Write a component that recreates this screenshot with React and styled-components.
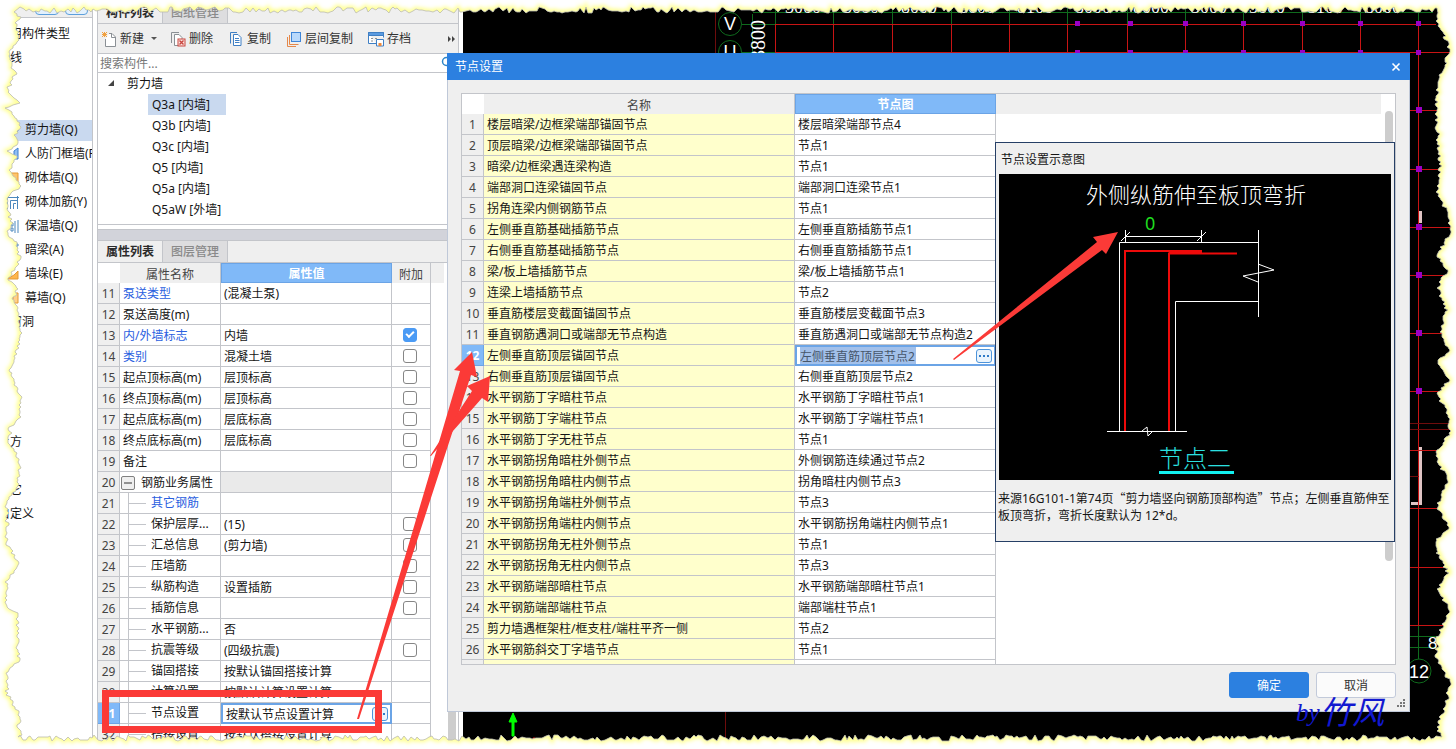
import React from "react";
import styled, { createGlobalStyle, css } from "styled-components";

const line = "#c3c5ca";
const soft = "#efefef";
const blue = "#2c80e0";
const headBlue = "#80b9f8";
const mark = "#fb3a37";

const GlobalStyle = createGlobalStyle`
  *, *::before, *::after { box-sizing: border-box; }
  body {
    margin: 0;
    background: #fff;
    color: #151515;
    font: 12px/20px "Noto Sans", "Noto Sans CJK SC", sans-serif;
  }
  button, input { font: inherit; color: inherit; margin: 0; padding: 0; }
  button { background: none; border: 0; }
  ul { list-style: none; margin: 0; padding: 0; }
`;

const Desktop = styled.div`
  position: relative;
  display: flex;
  height: 100vh;
  overflow: hidden;
`;

/* ---------- category navigation ---------- */

const Nav = styled.nav`
  flex: 0 0 93px;
  border-right: 1px solid ${line};
  overflow: hidden;
`;

const NavHead = styled.div`
  display: flex;
  gap: 6px;
  height: 18px;
  padding: 0 4px 2px 35px;
  background: ${soft};
  border-bottom: 1px solid ${line};
`;

const NavTool = styled.button`
  width: 24px;
  height: 15px;
  background: #e3f1fd;
  border: 1px solid #5c9fdc;
  border-radius: 4px;
`;

const NavList = styled.ul`
  padding-top: 4px;
`;

const NavRow = styled.li`
  display: flex;
  align-items: center;
  height: 24px;
  white-space: nowrap;
`;

const NavGroup = styled.span`
  text-indent: -2px;
`;

const NavItem = styled.button`
  display: flex;
  align-items: center;
  gap: 6px;
  width: 100%;
  height: 21px;
  padding-left: 5px;
  background: ${(p) => (p.$active ? "#c9d9ef" : "none")};
  svg { flex: none; }
`;

/* ---------- component / property panel ---------- */

const Panel = styled.section`
  display: flex;
  flex-direction: column;
  flex: 0 0 362px;
  margin: 0 4px;
  border: solid ${line};
  border-width: 0 1px;
  background: #fff;
`;

const Tabs = styled.div`
  display: flex;
  flex: none;
  height: ${(p) => (p.$top ? 24 : 22)}px;
  padding-top: ${(p) => (p.$top ? 2 : 0)}px;
  background: ${soft};
  border-bottom: 1px solid ${line};
`;

const Tab = styled.button`
  width: 65px;
  border-right: 1px solid ${line};
  background: ${(p) => (p.$active ? soft : "#dddddf")};
  color: ${(p) => (p.$active ? "#2b2b2b" : "#8a8a8a")};
  font-weight: ${(p) => (p.$active ? 700 : 500)};
`;

const Toolbar = styled.div`
  display: flex;
  align-items: center;
  gap: 11px;
  height: 30px;
  flex: none;
  padding: 0 2px 0 1px;
  background: ${soft};
  border-bottom: 1px solid ${line};
`;

const Split = styled.div`
  display: flex;
`;

const ToolButton = styled.button`
  display: flex;
  align-items: center;
  gap: 3px;
  padding: 0 2px;
  color: #333;
  white-space: nowrap;
`;

const Caret = styled.button`
  width: 11px;
  display: flex;
  align-items: center;
  justify-content: flex-end;
`;

const More = styled(Caret)`
  margin-left: auto;
`;

const SearchBar = styled.label`
  display: flex;
  align-items: center;
  flex: none;
  height: 19px;
  padding: 0 3px 0 2px;
  border-bottom: 1px solid ${line};
  input {
    flex: 1;
    min-width: 0;
    height: 18px;
    padding-top: 1px;
    border: 0;
    outline: 0;
    background: none;
  }
  input::placeholder { color: #777; opacity: 1; }
`;

const Tree = styled.ul`
  flex: none;
  padding-bottom: 4px;
  border-bottom: 1px solid ${line};
`;

const TreeRoot = styled.li`
  display: flex;
  align-items: center;
  gap: 12px;
  height: 21px;
  padding-left: 9px;
`;

const TreeLeaf = styled.li`
  height: 21px;
  padding-left: 50px;
`;

const LeafButton = styled.button`
  height: 21px;
  padding: 0 16px 0 4px;
  background: ${(p) => (p.$active ? "#c9d9ef" : "none")};
`;

const Splitter = styled.div`
  flex: none;
  height: 12px;
  margin-top: 4px;
  background: #d2d3da;
  border: solid ${line};
  border-width: 1px 0;
`;

const PropArea = styled.div`
  flex: 1;
  min-height: 0;
  display: flex;
  justify-content: space-between;
  overflow: hidden;
  padding-right: 2px;
`;

const Thumb = styled.div`
  width: 8px;
  background: #cdcdcd;
`;

/* ---------- tables ---------- */

const Grid = styled.table`
  table-layout: fixed;
  border-collapse: separate;
  border-spacing: 0;
  width: ${(p) => p.$width};
  height: fit-content;
`;

const Head = styled.th`
  height: 20px;
  padding: 2px 0 0;
  line-height: 17px;
  font-weight: 400;
  color: #444;
  background: ${(p) => (p.$blank ? "#fff" : soft)};
  border-right: ${(p) => (p.$blank || p.$tail ? 0 : 1)}px solid ${line};
  ${(p) =>
    p.$current &&
    css`
      padding-top: 1px;
      background: ${headBlue};
      border: 1px solid #6ba4e6;
      color: #fff;
      font-weight: 700;
    `}
`;

const RowNo = styled.th`
  height: 21px;
  padding: 2px 0 0;
  line-height: 18px;
  font-weight: 400;
  color: #444;
  background: ${soft};
  border: solid ${line};
  border-width: 0 1px 1px 0;
  ${(p) =>
    p.$current &&
    css`
      background: ${headBlue};
      border-color: #6ba4e6;
      color: #fff;
      font-weight: 700;
    `}
`;

const Cell = styled.td`
  height: 21px;
  padding: 2px 0 0 3px;
  line-height: 18px;
  border: solid ${line};
  border-width: 0 1px 1px 0;
  background: ${(p) => p.$bg || "#fff"};
  color: ${(p) => (p.$link ? "#2a60e0" : "inherit")};
  white-space: nowrap;
  overflow: hidden;
`;

const CheckCell = styled(Cell)`
  padding: 0 2px 0 0;
`;

const EditCell = styled(Cell)`
  padding: 0 2px 0 3px;
  border: 2px solid #6ba4e6;
  line-height: 16px;
`;

const Editor = styled.div`
  display: flex;
  align-items: center;
  justify-content: space-between;
  height: 17px;
`;

const EditInput = styled.input`
  width: ${(p) => (p.$selected ? 116 : 130)}px;
  height: 17px;
  border: 0;
  outline: 0;
  background: ${(p) => (p.$selected ? "#a2c0ea" : "none")};
  color: ${(p) => (p.$selected ? "#46566a" : "inherit")};
`;

const Ellipsis = styled.button`
  display: flex;
  align-items: center;
  justify-content: center;
  width: 16px;
  height: 14px;
  border: 1px solid #4d94da;
  border-radius: 3px;
  background: #eaf4fd;
`;

const Check = styled.input`
  appearance: none;
  position: relative;
  display: block;
  width: 14px;
  height: 14px;
  margin: 0 auto;
  border: 1px solid #868686;
  border-radius: 3px;
  background: #fff;
  &:checked { background: #4b9bf5; border-color: #4b9bf5; }
  &:checked::after {
    content: "";
    position: absolute;
    left: 2px;
    top: 2px;
    width: 8px;
    height: 5px;
    border: solid #fff;
    border-width: 0 0 2px 2px;
    transform: rotate(-45deg);
  }
`;

const Branch = styled.div`
  display: flex;
  align-items: center;
  gap: 5px;
  height: 20px;
  margin-top: -2px;
  padding-left: 5px;
  line-height: 22px;
  &::before {
    content: "";
    align-self: stretch;
    width: 1px;
    margin-right: -5px;
    background: ${line};
  }
`;

const Twig = styled.span`
  width: 17px;
  height: 1px;
  background: ${line};
`;

const Parent = styled.div`
  display: flex;
  align-items: center;
  gap: 6px;
  margin-left: -2px;
`;

const Fold = styled.button`
  display: flex;
  align-items: center;
  justify-content: center;
  width: 14px;
  height: 14px;
  border: 1px solid #808080;
  border-radius: 2px;
  background: ${soft};
`;

/* ---------- drawing area ---------- */

const Canvas = styled.main`
  flex: 1;
  min-width: 0;
  background: #000;
  svg { display: block; width: 100%; height: 100%; }
`;

/* ---------- dialog ---------- */

const Dialog = styled.section`
  position: absolute;
  left: 447px;
  right: 46px;
  top: 53px;
  bottom: 37px;
  display: flex;
  flex-direction: column;
  background: ${soft};
  border: solid #bfc8d8;
  border-width: 0 1px 1px;
`;

const TitleBar = styled.header`
  display: flex;
  align-items: center;
  justify-content: space-between;
  flex: none;
  height: 27px;
  margin: 0 -1px;
  padding: 0 9px 0 8px;
  background: ${blue};
  color: #fff;
`;

const Close = styled.button`
  display: flex;
  padding: 0;
`;

const DialogBody = styled.div`
  position: relative;
  flex: 1;
  min-height: 0;
  margin: 13px 13px 0;
  border: 1px solid ${line};
  background: #fff;
`;

const GridClip = styled.div`
  height: 100%;
  overflow: hidden;
  padding-right: 14px;
`;

const Scroll = styled.div`
  position: absolute;
  right: 2px;
  top: 17px;
  bottom: 103px;
  width: 8px;
  border-radius: 4px;
  background: #cdcdcd;
`;

const Footer = styled.footer`
  position: relative;
  display: flex;
  justify-content: flex-end;
  gap: 7px;
  height: 46px;
  flex: none;
  padding: 7px 13px 0 0;
`;

const Action = styled.button`
  width: 80px;
  height: 26px;
  padding-top: 1px;
  border-radius: 3px;
  border: 1px solid ${(p) => (p.$primary ? blue : "#c2cada")};
  background: ${(p) => (p.$primary ? blue : "#fbfbfb")};
  color: ${(p) => (p.$primary ? "#fff" : "#333")};
`;

const Grip = styled.svg`
  position: absolute;
  right: 3px;
  bottom: 3px;
`;

const Preview = styled.aside`
  position: absolute;
  right: 0;
  top: 48px;
  width: 400px;
  height: 400px;
  padding: 7px 0 0 3px;
  background: ${soft};
  border: 1px solid #263f66;
  h3 {
    margin: 0;
    padding-left: 2px;
    height: 24px;
    font: inherit;
  }
  svg { display: block; }
  p {
    margin: 9px 0 0 -1px;
    line-height: 17px;
    white-space: nowrap;
  }
`;

const Quote = styled.span`
  font-family: "Noto Sans CJK SC", sans-serif;
`;

const Overlay = styled.svg`
  position: absolute;
  inset: 0;
  width: 100%;
  height: 100%;
  pointer-events: none;
`;

/* ---------- data ---------- */

const navRows = [
  { group: "常用构件类型" },
  { group: "轴线" },
  {},
  {},
  { item: "剪力墙(Q)", icon: "wall", active: true },
  { item: "人防门框墙(RF)", icon: "gate" },
  { item: "砌体墙(Q)", icon: "brick" },
  { item: "砌体加筋(Y)", icon: "bars" },
  { item: "保温墙(Q)", icon: "warm" },
  { item: "暗梁(A)", icon: "beam" },
  { item: "墙垛(E)", icon: "pier" },
  { item: "幕墙(Q)", icon: "curtain" },
  { group: "门窗洞" },
  {},
  {},
  {},
  {},
  { group: "土方" },
  {},
  { group: "其它" },
  { group: "自定义" },
];

const leaves = ["Q3a [内墙]", "Q3b [内墙]", "Q3c [内墙]", "Q5 [内墙]", "Q5a [内墙]", "Q5aW [外墙]"];

const props = [
  { n: "泵送类型", v: "(混凝土泵)", link: true },
  { n: "泵送高度(m)", v: "" },
  { n: "内/外墙标志", v: "内墙", link: true, c: true, on: true },
  { n: "类别", v: "混凝土墙", link: true, c: true },
  { n: "起点顶标高(m)", v: "层顶标高", c: true },
  { n: "终点顶标高(m)", v: "层顶标高", c: true },
  { n: "起点底标高(m)", v: "层底标高", c: true },
  { n: "终点底标高(m)", v: "层底标高", c: true },
  { n: "备注", v: "", c: true },
  { n: "钢筋业务属性", v: "", parent: true },
  { n: "其它钢筋", v: "", link: true, sub: true },
  { n: "保护层厚...", v: "(15)", sub: true, c: true },
  { n: "汇总信息", v: "(剪力墙)", sub: true, c: true },
  { n: "压墙筋", v: "", sub: true, c: true },
  { n: "纵筋构造", v: "设置插筋", sub: true, c: true },
  { n: "插筋信息", v: "", sub: true, c: true },
  { n: "水平钢筋...", v: "否", sub: true },
  { n: "抗震等级", v: "(四级抗震)", sub: true, c: true },
  { n: "锚固搭接", v: "按默认锚固搭接计算", sub: true },
  { n: "计算设置", v: "按默认计算设置计算", sub: true },
  { n: "节点设置", v: "按默认节点设置计算", sub: true, edit: true },
  { n: "搭接设置", v: "按默认搭接设置计算", sub: true },
];

const nodes = [
  ["楼层暗梁/边框梁端部锚固节点", "楼层暗梁端部节点4"],
  ["顶层暗梁/边框梁端部锚固节点", "节点1"],
  ["暗梁/边框梁遇连梁构造", "节点1"],
  ["端部洞口连梁锚固节点", "端部洞口连梁节点1"],
  ["拐角连梁内侧钢筋节点", "节点1"],
  ["左侧垂直筋基础插筋节点", "左侧垂直筋插筋节点1"],
  ["右侧垂直筋基础插筋节点", "右侧垂直筋插筋节点1"],
  ["梁/板上墙插筋节点", "梁/板上墙插筋节点1"],
  ["连梁上墙插筋节点", "节点2"],
  ["垂直筋楼层变截面锚固节点", "垂直筋楼层变截面节点3"],
  ["垂直钢筋遇洞口或端部无节点构造", "垂直筋遇洞口或端部无节点构造2"],
  ["左侧垂直筋顶层锚固节点", "左侧垂直筋顶层节点2"],
  ["右侧垂直筋顶层锚固节点", "右侧垂直筋顶层节点2"],
  ["水平钢筋丁字暗柱节点", "水平钢筋丁字暗柱节点1"],
  ["水平钢筋丁字端柱节点", "水平钢筋丁字端柱节点1"],
  ["水平钢筋丁字无柱节点", "节点1"],
  ["水平钢筋拐角暗柱外侧节点", "外侧钢筋连续通过节点2"],
  ["水平钢筋拐角暗柱内侧节点", "拐角暗柱内侧节点3"],
  ["水平钢筋拐角端柱外侧节点", "节点3"],
  ["水平钢筋拐角端柱内侧节点", "水平钢筋拐角端柱内侧节点1"],
  ["水平钢筋拐角无柱外侧节点", "节点1"],
  ["水平钢筋拐角无柱内侧节点", "节点3"],
  ["水平钢筋端部暗柱节点", "水平钢筋端部暗柱节点1"],
  ["水平钢筋端部端柱节点", "端部端柱节点1"],
  ["剪力墙遇框架柱/框支柱/端柱平齐一侧", "节点2"],
  ["水平钢筋斜交丁字墙节点", "节点1"],
];

/* ---------- icons ---------- */

const navArt = {
  wall: <path d="M4 6 13 1v7l-4 4H2V7z" fill="#5b9bea" stroke="#3c7fd0" />,
  gate: <path d="M2 12h11V1L9 4v5H3z" fill="#8fbdf2" stroke="#3c7fd0" />,
  brick: <path d="M1 2h12v9H9V6H1z" fill="#ffc56b" stroke="#e39a35" />,
  bars: <path d="M2.500 14V2.500H14M5.500 14V5.500H12M8.500 14V8.500H11M12.500 1v13" fill="none" stroke="#4b87bd" />,
  warm: <path d="M13 1v13M10 2v12M6 4h2v3H6zM6 9h2v3H6z" fill="none" stroke="#4b87bd" />,
  beam: <path d="M1 1h12v2H8" fill="none" stroke="#4b87bd" />,
  pier: <path d="M2 12h11V4L9 8z" fill="#ffb64d" stroke="#e39a35" />,
  curtain: <path d="M3 2h10v10H3zM8 2v10" fill="#ffd08a" stroke="#e39a35" />,
};

const NavIcon = ({ kind }) => (
  <svg width="14" height="14" viewBox="0 0 14 14">{navArt[kind]}</svg>
);

const toolArt = {
  create: (
    <>
      <path d="M8 2.500h3l3.500 3.500v9.500h-10V8" fill="#fff" stroke="#8b9095" />
      <path d="M10.500 2.500v4h4" fill="none" stroke="#8b9095" />
      <path d="M3.500 1v5M1 3.500h5M1 1l5 5M6 1l-5 5" stroke="#f0a040" strokeWidth="1" />
    </>
  ),
  remove: (
    <>
      <path d="M9 1.500H1.500V12" fill="none" stroke="#8b9095" />
      <path d="M8 14.500H4.500v-11H9l3 3V8" fill="#fff" stroke="#8b9095" />
      <rect x="8" y="8" width="7" height="7" fill="#fbe3e0" stroke="#c9463f" />
      <path d="M9.500 9.500l4 4M13.500 9.500l-4 4" stroke="#c9463f" strokeWidth="1.400" />
    </>
  ),
  copy: (
    <>
      <path d="M9 1.500H2.500v11" fill="none" stroke="#3f7fc4" />
      <path d="M5.500 3.500h4.500l3 3v8h-7.500z" fill="#fff" stroke="#3f7fc4" />
      <path d="M7 7.500h4M7 9.500h4.500M7 11.500h4.500" stroke="#3f7fc4" />
    </>
  ),
  floors: (
    <>
      <path d="M1.500 6v9.500H10" fill="none" stroke="#e5884a" />
      <path d="M3.500 4v9.500h9" fill="none" stroke="#e5884a" />
      <rect x="5.500" y="1.500" width="9" height="9" fill="#b9d9fb" stroke="#3f86d8" />
    </>
  ),
  store: (
    <>
      <path d="M.5 1.500h15v5M.5 1.500v11H8" fill="#fff" stroke="#3f7fc4" />
      <path d="M.5 1.500h15v3H.5z" fill="#5b9be0" stroke="#3f7fc4" />
      <path d="M3 7.500h2M7 7.500h2M3 10h2" stroke="#8b9095" />
      <path d="M8.500 8.500h7v6.500h-7z" fill="#fff" stroke="#3f7fc4" />
      <rect x="10.500" y="12" width="3" height="3" fill="#f08a3a" />
    </>
  ),
};

const ToolIcon = ({ kind }) => (
  <svg width="16" height="16" viewBox="0 0 16 16">{toolArt[kind]}</svg>
);

const Dots = () => (
  <svg width="10" height="2">
    <path d="M0 1h2M4 1h2M8 1h2" stroke="#2f7bc8" strokeWidth="2" />
  </svg>
);

/* ---------- drawings ---------- */

const colX = [312, 370, 429, 488, 546, 604, 664, 722, 780, 839, 897, 955];
const rowY = [110, 169, 227, 275, 333, 391, 450, 508, 567, 625];

const Plan = () => (
  <svg>
    <g fill="none" stroke="#0f6b1d">
      {colX.map((x) => <path key={x} d={`M${x}.5 0v24`} />)}
      <path d="M290 12.500h680M279 24.500h34M279 52.500h34M289.500 14v40" />
      <path d="M947 636.500h40M947 647.500h40M955.500 625v34" />
      <circle cx="267" cy="24" r="11.500" />
      <circle cx="267" cy="52" r="11.500" />
      <circle cx="956" cy="671" r="12" />
    </g>
    <path d="M956 211h3v12h-3zM956 447h3v58h-11v-3h8z" fill="#e0c4c4" />
    <g stroke="#c81414">
      {colX.map((x) => <path key={x} d={`M${x}.5 24v${x > 950 ? 601 : 40}`} />)}
      <path d="M313 24.500h660M313 52.500h680" />
      {rowY.map((y) => <path key={y} d={`M940 ${y}.5h60`} />)}
    </g>
    <path d="M252.500 12v42M262.500 700v49M940 423.500h60M940 429.500h60M940 476.500h16" stroke="#6e0c0c" />
    <g fill="#9a00c4">
      {[614, 667, 722, 780, 839, 897, 955].map((x) => (
        <React.Fragment key={x}>
          <rect x={x - 2} y="21" width="5" height="5" />
          <rect x={x - 2} y="50" width="5" height="5" />
        </React.Fragment>
      ))}
      {rowY.slice(0, 6).map((y) => <rect key={y} x="953" y={y - 3} width="6" height="6" />)}
    </g>
    <g fill="#fff" fontFamily="Liberation Sans Narrow, Liberation Sans, sans-serif" fontSize="18">
      <text x="267" y="30" textAnchor="middle">V</text>
      <text x="267" y="58" textAnchor="middle">U</text>
      <text x="956" y="678" textAnchor="middle" fontFamily="Liberation Sans">12</text>
      <text x="965" y="649" fontSize="17">8</text>
      <text transform="translate(302 60) rotate(-90)" fontFamily="Liberation Serif" fontSize="20">3800</text>
      <g fontFamily="Liberation Serif" fontSize="18">
        {["3000", "3000", "8000", "3000", "8100", "8000", "8000", "3000", "3000", "8100", "8000"].map((t, i) => (
          <text key={i} x={322 + i * 58} y="13">{t}</text>
        ))}
      </g>
    </g>
    <path d="M49 736v-14h-3l4-9 4 9h-3v14z" fill="#0f0" stroke="#0f0" />
    <path d="M67 741l4-4 4 4-4 4z" fill="#e01010" />
  </svg>
);

const Detail = () => (
  <svg width="392" height="306">
    <rect width="392" height="306" fill="#000" />
    <g fontFamily="Noto Sans CJK SC" fontWeight="300">
      <text x="87" y="29" fontSize="22" fill="#fff">外侧纵筋伸至板顶弯折</text>
      <text x="160" y="293" fontSize="24" fill="#2be0e0">节点二</text>
    </g>
    <text x="146" y="56" fontSize="18" fill="#1fdc1f" fontFamily="Noto Sans">0</text>
    <g fill="none" stroke="#fff">
      <path d="M126.500 56v13M202.500 56v13M126 62.500h77M122 67l9-9M198 67l9-9" />
      <path d="M259.500 56v87M120.500 257V68.500h139M176.500 257V127.500h83M108 257.500h80" />
      <path d="M259 90l16 6-31 6 15 6M143 257l5-4 1 9 5-5" />
    </g>
    <path d="M126 257V77h77M170 257V79.500h68" fill="none" stroke="#ee0a0a" strokeWidth="2" />
    <path d="M170 78h33" stroke="#ee0a0a" strokeWidth="3" />
    <rect x="160" y="297" width="75" height="3" fill="#12f0f0" />
  </svg>
);

/* Torn paper frame: coarse outline points, roughened with small repeatable spikes. */
const leftEdge = [[12, 12], [20, 17], [16, 24], [18, 34], [18, 40], [9, 50], [10, 62], [15, 75], [7, 92], [18, 103], [7, 108], [17, 119], [20, 127], [15, 137], [17, 143], [7, 152], [18, 156], [10, 170], [20, 187], [7, 197], [7, 207], [12, 223], [7, 233], [15, 242], [20, 260], [8, 280], [17, 287], [14, 300], [20, 317], [20, 340], [10, 373], [20, 393], [20, 417], [10, 427], [9, 443], [20, 460], [18, 487], [7, 503], [7, 543], [19, 563], [7, 580], [6, 607], [18, 613], [17, 640], [19, 660], [7, 673], [7, 693], [18, 713], [20, 738]];
const rightEdge = [[1436, 13], [1438, 24], [1445, 37], [1450, 50], [1445, 63], [1438, 80], [1436, 110], [1438, 140], [1440, 168], [1437, 190], [1448, 215], [1450, 233], [1437, 255], [1448, 270], [1437, 288], [1446, 310], [1440, 333], [1450, 350], [1437, 362], [1450, 380], [1437, 393], [1448, 413], [1450, 433], [1437, 450], [1437, 463], [1448, 477], [1437, 507], [1450, 527], [1437, 540], [1437, 553], [1448, 573], [1437, 590], [1450, 610], [1437, 637], [1437, 657], [1450, 683], [1445, 707], [1437, 727], [1442, 738]];

function buildFrame() {
  let seed = 7;
  const rnd = () => ((seed = (seed * 16807) % 2147483647) / 2147483647);
  const side = (pts) => {
    const out = [];
    for (let i = 0; i < pts.length - 1; i++) {
      const [x0, y0] = pts[i];
      const [x1, y1] = pts[i + 1];
      for (let y = y0; y < y1; y += 2) {
        const t = (y - y0) / (y1 - y0);
        out.push([Math.round(x0 + (x1 - x0) * t + (rnd() - 0.5) * 4), y]);
      }
    }
    return out;
  };
  const row = (lo, hi) => {
    const out = [];
    for (let x = 20; x < 1438; x += 2 + Math.floor(rnd() * 3)) out.push([x, Math.round(lo + rnd() * (hi - lo))]);
    return out;
  };
  const loop = [...row(7, 13), ...side(rightEdge), ...row(735, 741).reverse(), ...side(leftEdge).reverse()];
  return "M" + loop.map((p) => p.join(" ")).join("L") + "Z";
}

const tornLoop = buildFrame();
const outside = "M0 0H1456V749H0Z" + tornLoop;

const TornFrame = () => (
  <Overlay viewBox="0 0 1456 749" preserveAspectRatio="none" aria-hidden="true">
    <defs>
      <clipPath id="outside"><path d={outside} clipRule="evenodd" /></clipPath>
      <filter id="glow"><feGaussianBlur stdDeviation="2" /></filter>
    </defs>
    <path d={outside} fill="#fff" fillRule="evenodd" />
    <g clipPath="url(#outside)">
      <path d={tornLoop} fill="none" stroke="#ffff66" strokeWidth="4" strokeOpacity="0.85" filter="url(#glow)" />
    </g>
    <path d={tornLoop} fill="none" stroke="#bcbcb0" strokeWidth="1" strokeOpacity="0.8" />
  </Overlay>
);

const Marks = () => (
  <Overlay aria-hidden="true">
    <rect x="105.500" y="693.500" width="273" height="36" fill="none" stroke={mark} strokeWidth="7" />
    <g fill={mark}>
      <path d="M357 719 460 371 454 370 472 352 477 377 471 375 359 719z" />
      <path d="M430 456 472 391 467 386 490 376 488 402 482 398 431 456z" />
      <path d="M953 359 1097 242 1093 237 1118 232 1106 254 1102 250 954 360z" />
    </g>
    <g fill="#1218d0" fontStyle="italic">
      <text x="1296" y="721" fontSize="25" fontFamily="Liberation Serif">by</text>
      <text x="1320" y="724" fontSize="32" fontFamily="Noto Sans CJK SC">竹风</text>
    </g>
  </Overlay>
);

/* ---------- parts ---------- */

function PropertyName({ row }) {
  if (row.parent)
    return (
      <Parent>
        <Fold type="button" aria-label="收起">
          <svg width="8" height="2"><path d="M0 1h8" stroke="#333" strokeWidth="1" /></svg>
        </Fold>
        {row.n}
      </Parent>
    );
  if (row.sub) return <Branch><Twig />{row.n}</Branch>;
  return row.n;
}

function PropertyTable() {
  return (
    <Grid $width="346px">
      <colgroup>
        <col style={{ width: 22 }} />
        <col style={{ width: 101 }} />
        <col style={{ width: 171 }} />
        <col style={{ width: 39 }} />
        <col />
      </colgroup>
      <thead>
        <tr>
          <Head $blank />
          <Head>属性名称</Head>
          <Head $current>属性值</Head>
          <Head>附加</Head>
          <Head $tail />
        </tr>
      </thead>
      <tbody>
        {props.map((row, i) => (
          <tr key={row.n}>
            <RowNo scope="row" $current={row.edit}>{i + 11}</RowNo>
            <Cell $link={row.link}><PropertyName row={row} /></Cell>
            {row.edit ? (
              <EditCell>
                <Editor>
                  <EditInput aria-label={row.n} defaultValue={row.v} />
                  <Ellipsis type="button" aria-label="更多"><Dots /></Ellipsis>
                </Editor>
              </EditCell>
            ) : (
              <Cell $bg={row.parent ? "#eaeaea" : undefined}>{row.v}</Cell>
            )}
            <CheckCell>
              {row.c && <Check type="checkbox" aria-label={`附加 ${row.n}`} defaultChecked={row.on} />}
            </CheckCell>
            <td />
          </tr>
        ))}
      </tbody>
    </Grid>
  );
}

function NodeTable() {
  return (
    <Grid $width="100%">
      <colgroup>
        <col style={{ width: 22 }} />
        <col style={{ width: 311 }} />
        <col style={{ width: 201 }} />
        <col />
      </colgroup>
      <thead>
        <tr>
          <Head $blank />
          <Head>名称</Head>
          <Head $current>节点图</Head>
          <Head $tail />
        </tr>
      </thead>
      <tbody>
        {nodes.map(([name, value], i) => (
          <tr key={name}>
            <RowNo scope="row" $current={i === 11}>{i + 1}</RowNo>
            <Cell $bg="#ffffcc">{name}</Cell>
            {i === 11 ? (
              <EditCell>
                <Editor>
                  <EditInput $selected aria-label={name} defaultValue={value} />
                  <Ellipsis type="button" aria-label="更多"><Dots /></Ellipsis>
                </Editor>
              </EditCell>
            ) : (
              <Cell>{value}</Cell>
            )}
            <td />
          </tr>
        ))}
        <tr>
          <RowNo />
          <Cell $bg="#ffffcc" />
          <Cell />
          <td />
        </tr>
      </tbody>
    </Grid>
  );
}

export default function App() {
  return (
    <Desktop>
      <GlobalStyle />
      <Nav>
        <NavHead>
          <NavTool type="button" aria-label="展开" />
          <NavTool type="button" aria-label="折叠" />
        </NavHead>
        <NavList>
          {navRows.map((r, i) => (
            <NavRow key={i}>
              {r.group && <NavGroup>{r.group}</NavGroup>}
              {r.item && (
                <NavItem type="button" $active={r.active}>
                  <NavIcon kind={r.icon} />
                  {r.item}
                </NavItem>
              )}
            </NavRow>
          ))}
        </NavList>
      </Nav>

      <Panel>
        <Tabs $top>
          <Tab type="button" $active>构件列表</Tab>
          <Tab type="button">图纸管理</Tab>
        </Tabs>
        <Toolbar>
          <Split>
            <ToolButton type="button"><ToolIcon kind="create" />新建</ToolButton>
            <Caret type="button" aria-label="新建选项">
              <svg width="6" height="3"><path d="M0 0h6L3 3z" fill="#555" /></svg>
            </Caret>
          </Split>
          <ToolButton type="button"><ToolIcon kind="remove" />删除</ToolButton>
          <ToolButton type="button"><ToolIcon kind="copy" />复制</ToolButton>
          <ToolButton type="button"><ToolIcon kind="floors" />层间复制</ToolButton>
          <ToolButton type="button"><ToolIcon kind="store" />存档</ToolButton>
          <More type="button" aria-label="更多">
            <svg width="8" height="6"><path d="M0 0l3 3-3 3zM4 0l3 3-3 3z" fill="#444" /></svg>
          </More>
        </Toolbar>
        <SearchBar>
          <input type="text" placeholder="搜索构件..." aria-label="搜索构件" />
          <svg width="14" height="14">
            <path d="M9 9l4 4" stroke="#2f86c8" strokeWidth="2" />
            <circle cx="5.500" cy="5.500" r="4" fill="none" stroke="#2f86c8" strokeWidth="1.500" />
          </svg>
        </SearchBar>
        <Tree>
          <TreeRoot>
            <svg width="8" height="7"><path d="M7 0v6H1z" fill="#444" /></svg>
            剪力墙
          </TreeRoot>
          {leaves.map((t, i) => (
            <TreeLeaf key={t}><LeafButton type="button" $active={i === 0}>{t}</LeafButton></TreeLeaf>
          ))}
        </Tree>
        <Splitter />
        <Tabs>
          <Tab type="button" $active>属性列表</Tab>
          <Tab type="button">图层管理</Tab>
        </Tabs>
        <PropArea>
          <PropertyTable />
          <Thumb />
        </PropArea>
      </Panel>

      <Canvas><Plan /></Canvas>

      <Dialog role="dialog" aria-label="节点设置">
        <TitleBar>
          节点设置
          <Close type="button" aria-label="关闭">
            <svg width="10" height="10"><path d="M1.500 1.500l7 7M8.500 1.500l-7 7" stroke="#fff" strokeWidth="1.600" /></svg>
          </Close>
        </TitleBar>
        <DialogBody>
          <GridClip><NodeTable /></GridClip>
          <Scroll />
          <Preview>
            <h3>节点设置示意图</h3>
            <Detail />
            <p>
              来源16G101-1第74页<Quote>“</Quote>剪力墙竖向钢筋顶部构造<Quote>”</Quote>节点；左侧垂直筋伸至
              <br />
              板顶弯折，弯折长度默认为 12*d。
            </p>
          </Preview>
        </DialogBody>
        <Footer>
          <Action type="button" $primary>确定</Action>
          <Action type="button">取消</Action>
          <Grip width="9" height="9">
            <path d="M6 1h2M3 4h2M6 4h2M0 7h2M3 7h2M6 7h2" stroke="#777" strokeWidth="2" />
          </Grip>
        </Footer>
      </Dialog>

      <Marks />
      <TornFrame />
    </Desktop>
  );
}
